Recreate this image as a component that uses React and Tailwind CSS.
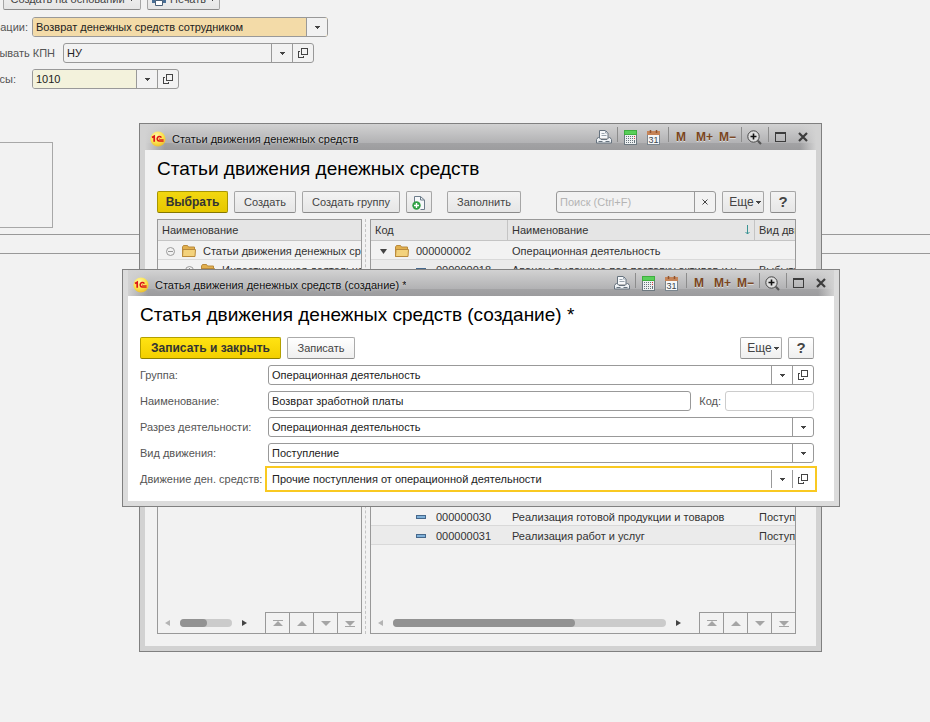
import React from "react";

const FONT = "font-['Liberation_Sans',Arial,sans-serif]";

function DownArrow({ className = "" }) {
  return (
    <svg className={className} width="5" height="3" viewBox="0 0 5 3" aria-hidden="true" shapeRendering="crispEdges">
      <path d="M0 0h5v1h-1v1h-1v1h-1v-1h-1v-1h-1z" fill="#444" />
    </svg>
  );
}

function OpenIcon() {
  return (
    <svg width="10" height="10" viewBox="0 0 10 10" fill="none" stroke="#444" aria-hidden="true" shapeRendering="crispEdges">
      <path d="M3.5 0.5h6v6h-6z" />
      <path d="M2 3.5h-1.5v6h5v-1.5" />
    </svg>
  );
}

function Combo({ id, value, open = false, focused = false, fill = "bg-transparent", className = "" }) {
  return (
    <div
      className={`flex h-5 min-w-0 ${
        focused ? "border border-transparent outline-2 outline-offset-1 outline-[#f9c921]" : "rounded-[3px] border border-[#999]"
      } ${className}`}
    >
      <div className="relative min-w-0 flex-1">
        <select id={id} defaultValue={value} className={`block h-full w-full appearance-none rounded-l-[2px] pr-6 pl-[3px] text-[11px] text-[#222] outline-none ${fill}`}>
          <option>{value}</option>
        </select>
        <span className="pointer-events-none absolute inset-y-0 right-0 flex w-[21px] items-center justify-center border-l border-[#999]">
          {fill !== "bg-transparent" && <span className="absolute inset-0 rounded-r-[2px] bg-[#f2f2f2]" />}
          <DownArrow className="relative" />
        </span>
      </div>
      {open && (
        <button type="button" aria-label="Открыть" className="flex w-[21px] items-center justify-center border-l border-[#999]">
          <OpenIcon />
        </button>
      )}
    </div>
  );
}

function Button({ primary = false, dim = false, size = "text-[11px]", className = "", children, ...rest }) {
  let look = "border-[#aaa] border-b-[#8e8e8e] bg-linear-to-b from-white to-[#efefef] text-[#444]";
  if (dim) look = "border-[#a6a6a6] border-b-[#8a8a8a] bg-linear-to-b from-[#f3f3f3] to-[#e6e6e6] text-[#444]";
  if (primary) look = "border-[#b3a000] border-b-[#8f8000] bg-linear-to-b from-[#ffe312] to-[#f3cf00] font-bold text-[#333]";
  if (primary && dim) look = "border-[#a89600] border-b-[#857700] bg-linear-to-b from-[#f2d710] to-[#e6c700] font-bold text-[#333]";
  return (
    <button type="button" className={`flex h-[22px] shrink-0 items-center justify-center rounded-[2px] border whitespace-nowrap ${size} ${look} ${className}`} {...rest}>
      {children}
    </button>
  );
}

function Logo() {
  return (
    <svg className="shrink-0" width="16" height="16" viewBox="0 0 16 16" aria-hidden="true">
      <defs>
        <radialGradient id="coin" cx="40%" cy="30%" r="75%">
          <stop offset="0" stopColor="#fff9a8" />
          <stop offset="0.6" stopColor="#fbe04a" />
          <stop offset="1" stopColor="#e6b830" />
        </radialGradient>
      </defs>
      <circle cx="8" cy="8" r="7.6" fill="url(#coin)" />
      <path d="M2 6.600L4.200 5.300V10.800" fill="none" stroke="#dc1418" strokeWidth="1.700" />
      <path d="M11.400 6.600A2.300 2.300 0 1 0 9.300 10.100H13.600" fill="none" stroke="#dc1418" strokeWidth="1.500" />
      <path d="M9.300 7.300v1.200h4.300" fill="none" stroke="#dc1418" strokeWidth="0.700" />
    </svg>
  );
}

function PrinterIcon() {
  return (
    <svg width="16" height="16" viewBox="0 0 16 16" aria-hidden="true">
      <path d="M3.5 9V1.500h6l2.500 2.500v5" fill="#f6f8fa" stroke="#66727e" />
      <path d="M9.500 1.500v2.500H12M5.500 4.500h3M5.500 6.500h5" fill="none" stroke="#9aa4ae" />
      <path d="M2.500 8L0.500 10.500v3.500h15v-3.500L13.500 8l-2.500 2.500h-6z" fill="#eef1f4" stroke="#66727e" />
      <path d="M2.500 12.500h4M9.500 12.500h4" stroke="#66727e" />
    </svg>
  );
}

function CalculatorIcon() {
  return (
    <svg width="13" height="15" viewBox="0 0 13 15" aria-hidden="true" shapeRendering="crispEdges">
      <rect width="13" height="15" fill="#6d7880" />
      <rect x="1" y="1" width="11" height="13" fill="#eef1f2" />
      <rect x="0" y="0" width="13" height="5" fill="#3fae3f" />
      <rect x="1" y="1" width="11" height="3" fill="#59cf59" />
      <path d="M2 6.500h7M2 8.500h7M2 10.500h7M2 12.500h7" stroke="#67737c" strokeDasharray="1 1" />
      <path d="M10.500 6v1M10.500 8v1" stroke="#e03030" />
      <path d="M10.500 10v3" stroke="#67737c" />
    </svg>
  );
}

function CalendarIcon() {
  return (
    <svg width="13" height="15" viewBox="0 0 13 15" aria-hidden="true">
      <rect x="0.500" y="1.500" width="12" height="13" fill="#f5f7f8" stroke="#7a858e" />
      <rect x="0" y="1" width="13" height="4" fill="#c58458" />
      <path d="M3.500 0v3M9.500 0v3" stroke="#8e5430" strokeWidth="1.500" />
      <text x="6.500" y="12.500" textAnchor="middle" fontSize="9" fontFamily="Liberation Sans" fill="#3c4650">31</text>
    </svg>
  );
}

function ZoomIcon() {
  return (
    <svg width="15" height="15" viewBox="0 0 15 15" fill="none" aria-hidden="true">
      <circle cx="6.500" cy="6.500" r="5.700" fill="#dedede" stroke="#444" />
      <path d="M6.500 3.500v6M3.500 6.500h6" stroke="#111" strokeWidth="1.600" />
      <path d="M10.800 10.800l3.200 3.200" stroke="#555" strokeWidth="2.200" />
    </svg>
  );
}

function Sep({ className = "" }) {
  return <span className={`h-[15px] w-px self-start bg-[#8c8c8c] ${className}`} />;
}

const MEM = "h-4 text-xs leading-4 font-bold text-[#7a4520] [text-shadow:0_1px_0_#ddd]";

function TitleBar({ title }) {
  return (
    <div className="relative flex h-[26px] items-center bg-[linear-gradient(#d2d2d2,#b2b2b4_72%,#a2a2a4_75%,#9c9c9e)] pr-2 pl-[5px]">
      <span className="absolute inset-y-0 left-0 w-5 bg-linear-to-r from-[#d2d2d2] to-transparent" />
      <span className="absolute inset-y-0 right-0 w-4 bg-linear-to-l from-[#d2d2d2] to-transparent" />
      <div className="relative flex min-w-0 flex-1 items-center gap-[6px] pt-1">
        <Logo />
        <span className="truncate text-[11px] text-[#111] [text-shadow:0_0_3px_#e4e4e4]">{title}</span>
      </div>
      <div className="relative flex h-5 shrink-0 items-center">
        <button type="button" aria-label="Печать"><PrinterIcon /></button>
        <Sep className="mr-[6px] ml-[5px]" />
        <button type="button" aria-label="Калькулятор" className="mr-[10px]"><CalculatorIcon /></button>
        <button type="button" aria-label="Календарь"><CalendarIcon /></button>
        <Sep className="mr-[7px] ml-2" />
        <button type="button" className={`w-[20px] text-left ${MEM}`}>M</button>
        <button type="button" className={`w-[23px] text-left ${MEM}`}>M+</button>
        <button type="button" className={`w-[22px] text-left ${MEM}`}>M−</button>
        <Sep className="mr-[5px]" />
        <button type="button" aria-label="Масштаб"><ZoomIcon /></button>
        <Sep className="mx-[6px]" />
        <button type="button" aria-label="Развернуть" className="mr-3">
          <svg width="11" height="10" viewBox="0 0 11 10" aria-hidden="true" shapeRendering="crispEdges">
            <path d="M0.500 0.500h10v9h-10zM0 1.500h11" fill="none" stroke="#3c3c3c" />
          </svg>
        </button>
        <button type="button" aria-label="Закрыть">
          <svg width="10" height="10" viewBox="0 0 10 10" aria-hidden="true">
            <path d="M1 1l8 8M9 1l-8 8" stroke="#3c3c3c" strokeWidth="2.200" />
          </svg>
        </button>
      </div>
    </div>
  );
}

function Folder() {
  return (
    <svg className="shrink-0" width="14" height="12" viewBox="0 0 14 12" aria-hidden="true">
      <path d="M0.500 11.500v-9.500l1-1.500h4l1 1.500h6v9.500z" fill="#e2b04e" stroke="#b98a3c" />
      <path d="M0.500 11.500l0.500-7h12.500l-0.500 7z" fill="#f3d27c" stroke="#b98a3c" />
    </svg>
  );
}

function Toggle({ plus = false }) {
  return (
    <svg className="shrink-0" width="9" height="9" viewBox="0 0 9 9" fill="none" stroke="#999" aria-hidden="true">
      <circle cx="4.500" cy="4.500" r="4" />
      <path d={plus ? "M2 4.500h5M4.500 2v5" : "M2 4.500h5"} />
    </svg>
  );
}

function Item() {
  return (
    <svg className="shrink-0" width="10" height="4" viewBox="0 0 10 4" aria-hidden="true" shapeRendering="crispEdges">
      <path d="M0.500 0.500h9v3h-9z" fill="#7fb0d8" stroke="#46688c" />
    </svg>
  );
}

const NAV = [
  ["В начало", "M0 0h10v1h-10zM5 1l5 5H0z"],
  ["Вверх", "M5 1l5 5H0z"],
  ["Вниз", "M0 1h10l-5 5z"],
  ["В конец", "M0 1h10l-5 5zM0 6h10v1h-10z"],
];

function ScrollFooter({ thumb }) {
  return (
    <div className="flex h-[21px] items-stretch">
      <div className="flex min-w-0 flex-1 items-center pr-[18px] pl-[7px]">
        <svg width="5" height="6" viewBox="0 0 5 6" aria-hidden="true"><path d="M5 0v6L0 3z" fill="#b4b4b4" /></svg>
        <div className="mx-[10px] h-2 flex-1 rounded-full bg-[#cbcbcb]">
          <div className={`h-2 rounded-full bg-[#929292] ${thumb}`} />
        </div>
        <svg width="5" height="6" viewBox="0 0 5 6" aria-hidden="true"><path d="M0 0v6l5-3z" fill="#444" /></svg>
      </div>
      {NAV.map(([label, d]) => (
        <button key={label} type="button" aria-label={label} className="-mr-px flex w-[25px] items-center justify-center border border-b-0 border-[#999]">
          <svg width="10" height="7" viewBox="0 0 10 7" aria-hidden="true"><path d={d} fill="#a5a5a5" /></svg>
        </button>
      ))}
    </div>
  );
}

const TH = "h-[21px] overflow-hidden border-b border-[#c4c4c4] bg-[#e5e5e5] px-1 text-left font-normal whitespace-nowrap";
const TD = "h-[19px] overflow-hidden border-b border-[#d9d9d9] px-1 pt-[2px] pb-0 leading-4 whitespace-nowrap";

function GroupTree() {
  return (
    <section className="flex w-[205px] shrink-0 flex-col overflow-hidden border border-[#999]">
      <table className="w-full table-fixed border-separate border-spacing-0">
        <thead>
          <tr><th className={TH}>Наименование</th></tr>
        </thead>
        <tbody>
          <tr>
            <td className={TD}>
              <div className="flex items-center gap-[7px] pl-1"><Toggle /><Folder />Статьи движения денежных средств</div>
            </td>
          </tr>
          <tr>
            <td className={TD}>
              <div className="flex items-center gap-[7px] pl-[23px]"><Toggle plus /><Folder />Инвестиционная деятельность</div>
            </td>
          </tr>
        </tbody>
      </table>
      <div className="flex-1" />
      <ScrollFooter thumb="w-[52%]" />
    </section>
  );
}

function ItemRow({ code, name, kind, shaded = false }) {
  return (
    <tr className={shaded ? "bg-[#ebebeb]" : ""}>
      <td className={TD}><div className="flex items-center gap-[10px] pl-[41px]"><Item />{code}</div></td>
      <td className={`${TD} text-ellipsis`}>{name}</td>
      <td className={TD}>{kind}</td>
    </tr>
  );
}

function ItemTable() {
  return (
    <section className="flex min-w-0 flex-1 flex-col overflow-hidden border border-[#999]">
      <table className="w-full table-fixed border-separate border-spacing-0">
        <thead>
          <tr>
            <th className={`${TH} w-[137px] border-r`}>Код</th>
            <th className={`${TH} border-r`}>
              <div className="flex items-center justify-between">
                Наименование
                <svg width="5" height="10" viewBox="0 0 5 10" fill="none" stroke="#3a9494" aria-label="По возрастанию" role="img">
                  <path d="M2.500 0v9M0.500 7l2 2 2-2" />
                </svg>
              </div>
            </th>
            <th className={`${TH} w-[40px]`}>Вид движения</th>
          </tr>
        </thead>
        <tbody>
          <tr>
            <td className={TD}>
              <div className="flex items-center gap-[7px] pl-[5px]">
                <svg width="8" height="5" viewBox="0 0 8 5" aria-hidden="true"><path d="M0 0h7L3.500 5z" fill="#444" /></svg>
                <Folder />000000002
              </div>
            </td>
            <td className={TD}>Операционная деятельность</td>
            <td className={TD} />
          </tr>
          <ItemRow code="000000018" name="Авансы выданные под поставку активов и услуг" kind="Выбытие" shaded />
          <tr><td colSpan={3} className="h-[228px] p-0" /></tr>
          <ItemRow code="000000030" name="Реализация готовой продукции и товаров" kind="Поступление" />
          <ItemRow code="000000031" name="Реализация работ и услуг" kind="Поступление" shaded />
        </tbody>
      </table>
      <div className="flex-1" />
      <ScrollFooter thumb="w-2/3" />
    </section>
  );
}

function ListWindow() {
  return (
    <section className="absolute top-[123px] right-[108px] left-[139px] border border-[#808080] bg-[#d2d2d2] px-[5px] pb-[5px] text-[#333]">
      <TitleBar title="Статьи движения денежных средств" />
      <div className="bg-[#f2f2f2] pt-[6px] pr-5 pb-3 pl-3">
        <h1 className="text-[19px] leading-[25px] text-black">Статьи движения денежных средств</h1>
        <div className="mt-[10px] flex gap-[6px]">
          <Button primary dim size="text-xs" className="w-[71px]">Выбрать</Button>
          <Button dim className="w-[62px]">Создать</Button>
          <Button dim className="w-[98px]">Создать группу</Button>
          <Button dim className="w-[26px]" aria-label="Создать копированием">
            <svg width="14" height="15" viewBox="0 0 14 15" aria-hidden="true">
              <path d="M2.500 14V1.500h6L12.500 5v9.500h-4" fill="#f6f8fa" stroke="#6c7c8a" />
              <path d="M8.500 1.500V5h4" fill="none" stroke="#6c7c8a" />
              <circle cx="4.500" cy="10.500" r="4.200" fill="#2fa043" />
              <path d="M4.500 8v5M2 10.500h5" stroke="#fff" strokeWidth="1.400" />
            </svg>
          </Button>
          <Button dim className="ml-[9px] w-[74px]">Заполнить</Button>
          <div className="ml-auto flex h-[22px] w-[160px] rounded-[3px] border border-[#999]">
            <input type="search" aria-label="Поиск" placeholder="Поиск (Ctrl+F)" className="min-w-0 flex-1 appearance-none bg-transparent px-[3px] text-[11px] outline-none placeholder:text-[#b4b4b4]" />
            <button type="button" aria-label="Очистить" className="flex w-[21px] items-center justify-center border-l border-[#999]">
              <svg width="6" height="6" viewBox="0 0 6 6" aria-hidden="true"><path d="M0.500 0.500l5 5M5.500 0.500l-5 5" stroke="#444" /></svg>
            </button>
          </div>
          <Button dim size="text-xs" className="w-[42px] gap-[2px] pl-1">Еще<DownArrow /></Button>
          <Button dim size="text-[15px]" className="w-[26px] font-bold">?</Button>
        </div>
        <div className="mt-[6px] flex h-[415px] text-[11px] leading-[18px]">
          <GroupTree />
          <div className="mr-1 ml-[3px] w-px border-l border-dashed border-[#c4c4c4]" />
          <ItemTable />
        </div>
      </div>
    </section>
  );
}

function Field({ id, label, children }) {
  return (
    <div className="flex items-center">
      <label htmlFor={id} className="w-32 shrink-0 whitespace-nowrap text-[#555]">{label}</label>
      {children}
    </div>
  );
}

function CreateWindow() {
  return (
    <section className="absolute top-[269px] right-[90px] left-[122px] border border-[#808080] bg-[#dcdcdc] px-[5px] pb-[5px]">
      <TitleBar title="Статья движения денежных средств (создание) *" />
      <form className="bg-white pt-[6px] pr-5 pb-3 pl-3">
        <h1 className="text-[19px] leading-[25px] text-black">Статья движения денежных средств (создание) *</h1>
        <div className="mt-[10px] flex gap-[6px]">
          <Button primary size="text-xs" className="w-[141px]">Записать и закрыть</Button>
          <Button className="w-[68px]">Записать</Button>
          <Button size="text-xs" className="ml-auto w-[42px] gap-[2px] pl-1">Еще<DownArrow /></Button>
          <Button size="text-[15px]" className="w-[26px] font-bold">?</Button>
        </div>
        <div className="mt-[6px] flex flex-col gap-[6px]">
          <Field id="group" label="Группа:"><Combo id="group" value="Операционная деятельность" open className="flex-1" /></Field>
          <Field id="name" label="Наименование:">
            <input id="name" defaultValue="Возврат зработной платы" className="h-5 min-w-0 flex-1 rounded-[3px] border border-[#999] px-[3px] text-[11px] text-[#222] outline-none" />
            <label htmlFor="code" className="ml-2 text-[#555]">Код:</label>
            <input id="code" className="ml-1 h-5 w-[89px] rounded-[3px] border border-[#ccc] px-[3px] text-[11px] outline-none" />
          </Field>
          <Field id="section" label="Разрез деятельности:"><Combo id="section" value="Операционная деятельность" className="flex-1" /></Field>
          <Field id="kind" label="Вид движения:"><Combo id="kind" value="Поступление" className="flex-1" /></Field>
          <Field id="flow" label="Движение ден. средств:"><Combo id="flow" value="Прочие поступления от операционной деятельности" open focused className="flex-1" /></Field>
        </div>
      </form>
    </section>
  );
}

export default function App() {
  return (
    <main className={`relative min-h-screen overflow-hidden bg-[#f2f2f2] ${FONT} text-[11px] text-[#555]`}>
      <div className="-mt-3 flex gap-[6px] pl-[3px]">
        <Button dim className="w-[138px] gap-1">Создать на основании<DownArrow /></Button>
        <Button dim className="w-[73px] gap-1">
          <svg width="14" height="13" viewBox="0 0 14 13" aria-hidden="true">
            <path d="M3 4V0.500h8V4" fill="#fff" stroke="#4a6078" />
            <path d="M1 4h12l1 1v5H0V5z" fill="#4a6f96" />
            <path d="M3.500 7.500h7v5h-7z" fill="#fff" stroke="#4a6078" />
          </svg>
          Печать<DownArrow />
        </Button>
      </div>
      <div className="mt-[7px] flex flex-col gap-[6px]">
        <div className="flex items-center gap-1">
          <label htmlFor="operation" className="flex w-7 justify-end">рации:</label>
          <Combo id="operation" value="Возврат денежных средств сотрудником" fill="bg-[#f3dba8]" className="w-[296px]" />
        </div>
        <div className="flex items-center gap-2">
          <label htmlFor="kpn" className="flex w-[55px] justify-end whitespace-nowrap">ывать КПН</label>
          <Combo id="kpn" value="НУ" open className="w-[251px]" />
        </div>
        <div className="flex items-center gap-4">
          <label htmlFor="cash" className="flex w-4 justify-end">сы:</label>
          <Combo id="cash" value="1010" open fill="bg-[#f3f2dc]" className="w-[147px]" />
        </div>
      </div>
      <div className="mt-[53px] h-[86px] w-[53px] border border-l-0 border-[#a8a8a8]" />
      <div className="mt-[6px] h-5 border-y border-[#999]" />
      <ListWindow />
      <CreateWindow />
    </main>
  );
}
